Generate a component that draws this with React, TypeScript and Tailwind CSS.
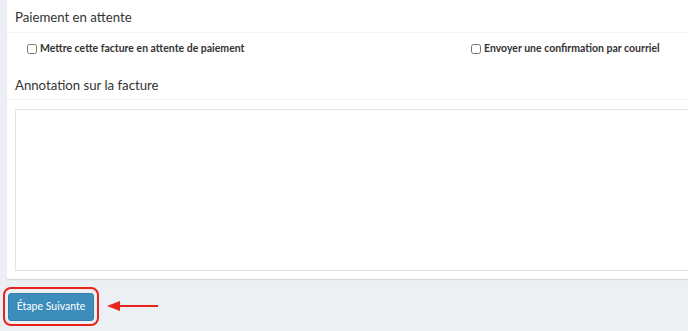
export default function App() {
  return (
    <div
      className="h-[331px] w-[688px] overflow-hidden bg-[#ecf0f5] text-[#333]"
      style={{ fontFamily: '"Source Sans Pro", Lato, "Noto Sans", sans-serif' }}
    >
      <div className="ml-[7px] w-[700px] bg-white shadow-[0_1px_1px_rgba(0,0,0,0.1)]">
        {/* Paiement en attente */}
        <div className="h-[33px] border-b border-[#f4f4f4] pl-[8px] pt-[7px] text-[13.2px] leading-[20px]">
          Paiement en attente
        </div>
        <div className="flex h-[32px] items-center whitespace-nowrap pl-[20px] text-[10.5px] font-bold">
          <label className="flex w-[444px] items-center gap-[3px]">
            <input type="checkbox" className="h-[10px] w-[10px]" />
            Mettre cette facture en attente de paiement
          </label>
          <label className="flex items-center gap-[3px]">
            <input type="checkbox" className="h-[10px] w-[10px]" />
            Envoyer une confirmation par courriel
          </label>
        </div>
        {/* Annotation */}
        <div className="h-[35px] border-b border-[#f4f4f4] pl-[8px] pt-[10px] text-[13.2px] leading-[20px]">
          Annotation sur la facture
        </div>
        <div className="px-[8px] pb-[8px] pt-[9px]">
          <textarea className="block h-[162px] w-full resize-none border border-[#e3e3e3] outline-none" />
        </div>
      </div>

      <div className="flex items-center pl-[3px] pt-[8px]">
        <div className="rounded-[8px] border-2 border-[#e8231a] p-[3px]">
          <button className="h-[28px] w-[86px] rounded-[3px] border border-[#367fa9] bg-[#3c8dbc] text-[10.5px] text-white">
            Étape Suivante
          </button>
        </div>
        <svg width="52" height="10" viewBox="0 0 52 10" className="ml-[8px]">
          <line x1="10" y1="5" x2="51" y2="5" stroke="#e8231a" strokeWidth="2.2" />
          <polygon points="0,5 13,0 13,10" fill="#e8231a" />
        </svg>
      </div>
    </div>
  );
}
